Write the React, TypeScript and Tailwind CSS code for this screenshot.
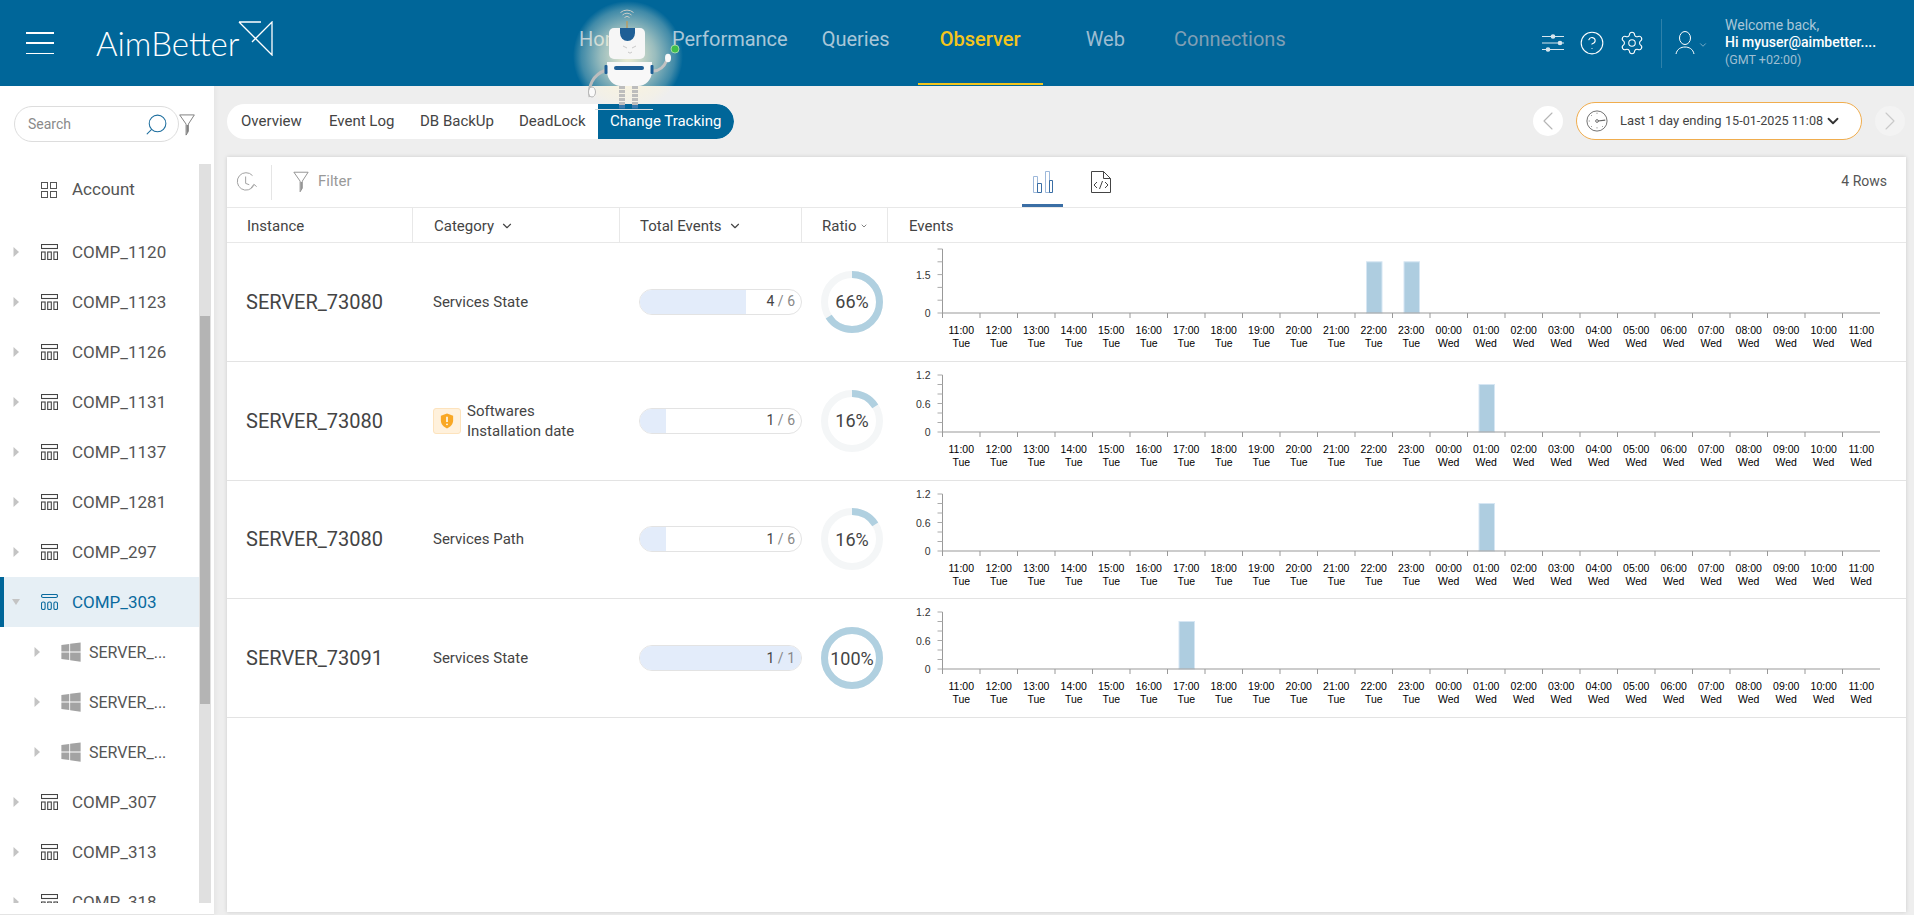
import React from "react";
import { FaWindows } from "react-icons/fa";
import { Search, CircleHelp, Settings, ChevronDown, ChevronLeft, ChevronRight } from "lucide-react";

const Funnel = ({ className }: { className?: string }) => (
  <svg viewBox="0 0 18 24" className={className} fill="none" stroke="currentColor" strokeWidth="1">
    <path d="M1 1h16l-6.5 10v8l-2.5 4v-12z" strokeLinejoin="round" />
    <path d="M8.5 12h1.5v7l-1.5 3z" fill="currentColor" stroke="none" />
  </svg>
);

const CompIcon = ({ active }: { active?: boolean }) => (
  <svg viewBox="0 0 17 16" className={`w-[17px] h-[16px] ${active ? "text-[#0a6a9e]" : "text-[#444]"}`} fill="none" stroke="currentColor" strokeWidth="1.1">
    <rect x="0.5" y="0.5" width="16" height={active ? 3 : 4} rx={active ? 1.5 : 0} />
    <rect x="0.5" y="8" width="3.6" height="7.5" rx={active ? 1.6 : 0} />
    <rect x="6.7" y="8" width="3.6" height="7.5" rx={active ? 1.6 : 0} />
    <rect x="12.9" y="8" width="3.6" height="7.5" rx={active ? 1.6 : 0} />
  </svg>
);

const Arrow = ({ open }: { open?: boolean }) => (
  <svg viewBox="0 0 8 10" className="w-[8px] h-[10px] text-[#c4c4c4]" fill="currentColor">
    {open ? <path d="M0 2h8l-4 6z" /> : <path d="M1.5 0l5.5 5-5.5 5z" />}
  </svg>
);

function TreeRow({ label, active, level }: { label: string; active?: boolean; level?: number }) {
  if (level === 1) {
    return (
      <div className="h-[50px] shrink-0 flex items-center">
        <div className="ml-[33px] w-[27px] flex"><Arrow /></div>
        <FaWindows className="text-[22px] text-[#a3a3a3]" />
        <span className="ml-[7px] text-[16px] text-[#555] mt-[1px]">{label}</span>
      </div>
    );
  }
  return (
    <div className={`h-[50px] shrink-0 flex items-center ${active ? "bg-[#e6eff5] border-l-4 border-[#006699]" : "pl-1"}`}>
      <div className="ml-[8px] w-[29px] flex"><Arrow open={active} /></div>
      <CompIcon active={active} />
      <span className={`ml-[14px] text-[17px] leading-none ${active ? "text-[#0a6a9e]" : "text-[#555]"}`}>{label}</span>
    </div>
  );
}

function Sidebar() {
  const before = ["COMP_1120", "COMP_1123", "COMP_1126", "COMP_1131", "COMP_1137", "COMP_1281", "COMP_297"];
  return (
    <aside className="w-[214px] shrink-0 bg-white flex flex-col border-b border-[#e4e4e4] [box-shadow:2px_0_4px_rgba(0,0,0,0.04)]">
      <div className="h-[78px] shrink-0 flex items-start pt-[20px] pl-[14px]">
        <div className="w-[165px] h-[36px] rounded-full border border-[#ddd] flex items-center justify-between pl-[13px] pr-[9px]">
          <span className="text-[14px] text-[#8a8a8a]">Search</span>
          <Search className="w-[25px] h-[25px] -scale-x-100 text-[#1f6f9f]" strokeWidth={1} />
        </div>
        <Funnel className="-ml-[1px] w-[18px] h-[22px] mt-[8px] text-[#777]" />
      </div>
      <div className="h-[739px] flex overflow-hidden">
        <div className="w-[199px] shrink-0 flex flex-col overflow-hidden">
          <div className="h-[50px] shrink-0 flex items-center pl-[41px] mb-[12px] mt-[1px]">
            <svg viewBox="0 0 16 16" className="w-[16px] h-[16px] text-[#555]" fill="none" stroke="currentColor" strokeWidth="1">
              <rect x="0.5" y="0.5" width="6" height="6" />
              <rect x="9.5" y="0.5" width="6" height="6" />
              <rect x="0.5" y="9.5" width="6" height="6" />
              <rect x="9.5" y="9.5" width="6" height="6" />
            </svg>
            <span className="ml-[15px] text-[17px] text-[#555]">Account</span>
          </div>
          {before.map((l) => <TreeRow key={l} label={l} />)}
          <TreeRow label="COMP_303" active />
          <TreeRow label="SERVER_..." level={1} />
          <TreeRow label="SERVER_..." level={1} />
          <TreeRow label="SERVER_..." level={1} />
          <TreeRow label="COMP_307" />
          <TreeRow label="COMP_313" />
          <TreeRow label="COMP_318" />
        </div>
        <div className="w-[12px] bg-[#e0e0e0] flex justify-center">
          <div className="w-[10px] h-[388px] mt-[152px] bg-[#b4b4b4]" />
        </div>
      </div>
    </aside>
  );
}

function Robot() {
  return (
    <svg viewBox="0 0 120 120" className="absolute left-[570px] top-0 w-[120px] h-[120px] pointer-events-none">
      <defs>
        <radialGradient id="glow" cx="0.5" cy="0.5" r="0.5">
          <stop offset="0" stopColor="#fff6d6" stopOpacity="0.95" />
          <stop offset="0.5" stopColor="#fff6d6" stopOpacity="0.6" />
          <stop offset="0.85" stopColor="#fff6d6" stopOpacity="0.25" />
          <stop offset="1" stopColor="#fff6d6" stopOpacity="0" />
        </radialGradient>
        <clipPath id="glowClip"><rect x="0" y="0" width="120" height="104" /></clipPath>
      </defs>
      <circle cx="58" cy="56" r="55" fill="url(#glow)" clipPath="url(#glowClip)" />
      <g fill="none" stroke="#c9ccc8" strokeWidth="1">
        <path d="M52.500 15a6.500 6.500 0 0 1 9 0M50.500 12.500a10 10 0 0 1 13 0M54.500 17.500a3.500 3.500 0 0 1 5 0" />
      </g>
      <path d="M57 21v7" stroke="#b79c64" strokeWidth="1.5" />
      <path d="M20 97c-2-10 2-22 16-27" stroke="#bdbdbd" strokeWidth="3" fill="none" />
      <ellipse cx="22" cy="92" rx="3.5" ry="5" fill="#fafafa" stroke="#b5b5b5" />
      <path d="M83 71c7 0 11-4 14-11" stroke="#c2c2c2" strokeWidth="3" fill="none" />
      <ellipse cx="98" cy="58" rx="3" ry="4.200" fill="#fafafa" />
      <rect x="39" y="28" width="36" height="31" rx="5" fill="#f6f6f6" />
      <path d="M50 28h15v5a7.500 8 0 0 1-15 0z" fill="#1f5f96" />
      <path d="M53 46l4 2M66 46l-4 2M58 52l2 1.200 2-1.200" stroke="#c9c9c9" strokeWidth="1" fill="none" />
      <path d="M37 62h45v9c0 9-7 15-14 15h-17c-7 0-14-6-14-15z" fill="#f8f8f8" />
      <rect x="44" y="66" width="30" height="4" rx="2" fill="#1f5f96" />
      <rect x="34.500" y="65" width="3" height="9" rx="1" fill="#1f5f96" />
      <rect x="80.500" y="65" width="3" height="9" rx="1" fill="#1f5f96" />
      <g stroke="#bdbdbd" strokeWidth="6" strokeDasharray="3 1">
        <path d="M52 86v19M65 86v19" />
      </g>
      <path d="M49 108.500h6v-3.500h-6zM62 108.500h6v-3.500h-6z" fill="#3a79ad" />
      <path d="M25 109.500h58" stroke="#d4dde0" strokeWidth="1" />
      <circle cx="105" cy="49" r="4" fill="#3fbf4a" stroke="#9fd8a5" />
    </svg>
  );
}

function TopBar() {
  return (
    <header className="h-[86px] shrink-0 bg-[#006699] flex items-center relative">
      <div className="ml-[26px] w-[28px] h-[22px] flex flex-col justify-between">
        <div className="h-[1.5px] bg-white" /><div className="h-[1.5px] bg-white" /><div className="h-[1.5px] bg-white" />
      </div>
      <div className="ml-[42px] flex items-start">
        <span className="[font-family:Lato,sans-serif] font-light text-[33px] leading-none text-white mt-[1px]">AimBetter</span>
        <svg viewBox="0 0 35 35" className="w-[35px] h-[35px] -ml-[1px] -mt-[5px] text-white" fill="none" stroke="currentColor" strokeWidth="1.3">
          <path d="M1 1h22M1 1l33 33V1L14 21" />
        </svg>
      </div>
      <nav className="absolute left-[579px] top-0 h-[85px] flex items-center text-[20px]">
        <span className="text-[#a9c6d8] w-[93px] pb-[8px]">Home</span>
        <span className="text-[#a9c6d8] pb-[8px]">Performance</span>
        <span className="text-[#a9c6d8] ml-[34px] pb-[8px]">Queries</span>
        <span className="text-[#f4c51c] ml-[28px] w-[125px] h-[85px] pb-[6px] flex items-center justify-center border-b-2 border-[#f4c51c] font-medium">Observer</span>
        <span className="text-[#9dbdd2] ml-[43px] pb-[8px]">Web</span>
        <span className="text-[#7f9fb5] ml-[49px] pb-[8px]">Connections</span>
      </nav>
      <div className="ml-auto flex items-center h-full">
        <svg viewBox="0 0 22 18" className="w-[22px] h-[18px] text-[#d8e6ee]" fill="none" stroke="currentColor" strokeWidth="1.2">
          <path d="M0 2.500h22M0 9h22M0 15.500h22" />
          <circle cx="11" cy="2.500" r="1.700" fill="currentColor" /><circle cx="18" cy="9" r="1.700" fill="currentColor" /><circle cx="6" cy="15.500" r="1.700" fill="currentColor" />
        </svg>
        <CircleHelp className="ml-[15px] w-[26px] h-[26px] text-white" strokeWidth={1} />
        <Settings className="ml-[14px] w-[26px] h-[26px] text-white" strokeWidth={1} />
        <div className="ml-[16px] w-px h-[49px] bg-[#2e81aa]" />
        <svg viewBox="0 0 20 24" className="ml-[13px] w-[20px] h-[24px] text-white" fill="none" stroke="currentColor" strokeWidth="1">
          <ellipse cx="10" cy="7" rx="5.500" ry="6.500" /><path d="M1 23c1-5 5-7 9-7s8 2 9 7" />
        </svg>
        <ChevronDown className="ml-[3px] mt-[4px] w-[10px] h-[10px] text-[#bcd3e0]" strokeWidth={1.5} />
        <div className="ml-[17px] w-[189px] flex flex-col -mt-[1px]">
          <span className="text-[14px] leading-[17px] text-[#a9c6d8]">Welcome back,</span>
          <span className="text-[14px] leading-[17px] text-white font-medium">Hi myuser@aimbetter....</span>
          <span className="text-[12.500px] leading-[17px] text-[#9fbfd2]">(GMT +02:00)</span>
        </div>
      </div>
    </header>
  );
}

function SubBar() {
  const tabs = [["Overview", 88], ["Event Log", 91], ["DB BackUp", 99], ["DeadLock", 79]] as const;
  return (
    <div className="h-[71px] shrink-0 flex items-start pt-[18px] pl-[13px] pr-[9px]">
      <div className="h-[35px] flex items-center bg-white rounded-full text-[15px] text-[#444] overflow-hidden">
        <div className="pl-[14px] flex">
          {tabs.map(([t, w]) => <span key={t} style={{ width: w }}>{t}</span>)}
        </div>
        <span className="h-full w-[136px] bg-[#006699] text-white flex items-center pl-[12px] rounded-r-full">Change Tracking</span>
      </div>
      <div className="ml-auto flex items-center -mt-[2px]">
        <div className="w-[30px] h-[30px] rounded-full bg-white flex items-center justify-center">
          <ChevronLeft className="w-[32px] h-[32px] shrink-0 text-[#b5b5b5]" strokeWidth={0.8} />
        </div>
        <div className="ml-[13px] w-[286px] h-[38px] rounded-full bg-white border border-[#f0ad4e] flex items-center pl-[9px] text-[13px] text-[#444]">
          <svg viewBox="0 0 24 24" className="w-[22px] h-[22px] text-[#666]" fill="none" stroke="currentColor" strokeWidth="1">
            <circle cx="12" cy="12" r="11" /><circle cx="12" cy="12" r="1.500" /><path d="M13 12l8-1" strokeWidth="1.300" />
            <path d="M12 3v2M12 19v2M3 12h2M5.500 5.500l1.200 1.200M5.500 18.500l1.200-1.200M18.500 18.500l-1.200-1.200" strokeDasharray="1 1" />
          </svg>
          <span className="ml-[12px] w-[105px]">Last 1 day ending</span>
          <span className="text-[12.600px]">15-01-2025 11:08</span>
          <ChevronDown className="ml-[1px] w-[18px] h-[18px] text-[#333]" strokeWidth={2.400} />
        </div>
        <div className="ml-[13px] w-[30px] h-[30px] rounded-full bg-[#f3f3f3] flex items-center justify-center">
          <ChevronRight className="w-[32px] h-[32px] shrink-0 text-[#c9c9c9]" strokeWidth={0.8} />
        </div>
      </div>
    </div>
  );
}

function Donut({ pct }: { pct: number }) {
  const r = 27.5;
  const c = 2 * Math.PI * r;
  return (
    <div className="relative w-[62px] h-[62px]">
      <svg viewBox="0 0 62 62" className="w-[62px] h-[62px] -rotate-90" fill="none" strokeWidth="7">
        <circle cx="31" cy="31" r={r} stroke="#f4f6f7" />
        <circle cx="31" cy="31" r={r} stroke="#b0d0e0" strokeDasharray={`${(c * pct) / 100} ${c}`} />
      </svg>
      <span className="absolute inset-0 flex items-center justify-center text-[18px] text-[#444]">{pct}%</span>
    </div>
  );
}

const hours = ["11:00", "12:00", "13:00", "14:00", "15:00", "16:00", "17:00", "18:00", "19:00", "20:00", "21:00", "22:00", "23:00", "00:00", "01:00", "02:00", "03:00", "04:00", "05:00", "06:00", "07:00", "08:00", "09:00", "10:00", "11:00"];

function Chart({ top, bars, maxV, labels, steps }: { top: number; bars: number[]; maxV: number; labels: [number, string][]; steps: number }) {
  const x0 = 54.5, axis = 70, slot = 37.5;
  const h = axis - top;
  const barH = maxV === 2.5 ? 51.2 : 47.5;
  return (
    <svg viewBox="0 0 1018 118" className="w-[1018px] h-[118px]" style={{ fontFamily: "'Liberation Sans',sans-serif" }}>
      {bars.map((b) => (
        <rect key={b} x={x0 + b * slot + 11.5} y={axis - barH} width="15.5" height={barH} fill="#aecde0" stroke="#d6e6f3" strokeWidth="1" />
      ))}
      <path d={`M${x0} ${top}V${axis}H${x0 + 25 * slot}`} stroke="#999" strokeWidth="1" fill="none" />
      {Array.from({ length: steps + 1 }).map((_, i) => (
        <path key={i} d={`M${x0 - 5} ${top + (h * i) / steps}H${x0}`} stroke="#aaa" strokeWidth="1" />
      ))}
      {labels.map(([v, t]) => (
        <text key={t} x={x0 - 12} y={axis - (v / maxV) * h + 4} textAnchor="end" fontSize="10.5" fill="#333">{t}</text>
      ))}
      {hours.map((t, i) => (
        <g key={i}>
          <path d={`M${x0 + i * slot} ${axis}v5`} stroke="#999" strokeWidth="1" />
          <text x={x0 + i * slot + slot / 2} y={91} textAnchor="middle" fontSize="10.5" fill="#000">{t}</text>
          <text x={x0 + i * slot + slot / 2} y={104} textAnchor="middle" fontSize="10.5" fill="#000">{i >= 13 ? "Wed" : "Tue"}</text>
        </g>
      ))}
    </svg>
  );
}

function Shield() {
  return (
    <div className="w-[28px] h-[26px] shrink-0 rounded-[3px] bg-[#fff1dc] border border-[#fde3bd] flex items-center justify-center">
      <svg viewBox="0 0 16 18" className="w-[14px] h-[16px]">
        <path d="M8 0.500l7 2.500v5c0 4.500-3 7.500-7 9.500-4-2-7-5-7-9.500V3z" fill="#f9a825" />
        <path d="M8 4v6" stroke="#fff" strokeWidth="1.800" /><circle cx="8" cy="12.800" r="1" fill="#fff" />
      </svg>
    </div>
  );
}

function Row({ server, category, icon, num, den, pct, chart }: { server: string; category: React.ReactNode; icon?: boolean; num: number; den: number; pct: number; chart: React.ReactNode }) {
  const width = num === den ? 100 : pct;
  return (
    <div className="h-[118.750px] shrink-0 flex border-b border-[#e3e3e3]">
      <div className="w-[186px] shrink-0 flex items-center pl-[19px] text-[20px] text-[#444]">{server}</div>
      <div className="w-[207px] shrink-0 flex items-center pl-[20px] text-[15px] leading-[20px] text-[#444] gap-[6px]">
        {icon && <Shield />}
        <span>{category}</span>
      </div>
      <div className="w-[182px] shrink-0 flex items-center pl-[19px]">
        <div className="w-[163px] h-[26px] rounded-full border border-[#e3e3e3] overflow-hidden relative bg-white">
          <div className="h-full bg-[#e3ecfa]" style={{ width: `${width}%` }} />
          <span className="absolute right-[6px] top-0 h-full flex items-center text-[14px] text-[#888]"><b className="font-normal text-[#444]">{num}</b>&nbsp;/ {den}</span>
        </div>
      </div>
      <div className="w-[86px] shrink-0 flex items-center pl-[19px]"><Donut pct={pct} /></div>
      <div className="flex-1 overflow-hidden">{chart}</div>
    </div>
  );
}

const HeadCell = ({ w, pl, label, chev, small }: { w: number | string; pl: number; label: string; chev?: boolean; small?: boolean }) => (
  <div className="h-full flex items-center border-r border-[#e8e8e8] text-[15px] text-[#444] pt-[2px]" style={{ width: w, paddingLeft: pl }}>
    {label}
    {chev && <ChevronDown className={small ? "ml-[3px] w-[8px] h-[8px]" : "ml-[6px] w-[14px] h-[14px]"} strokeWidth={2} />}
  </div>
);

export default function App() {
  const y12: [number, string][] = [[0, "0"], [0.6, "0.6"], [1.2, "1.2"]];
  return (
    <div className="w-screen h-screen overflow-hidden bg-[#eeeeee] flex flex-col relative [font-family:Roboto,sans-serif]">
      <TopBar />
      <div className="flex-1 flex min-h-0">
        <Sidebar />
        <div className="flex-1 min-w-0 flex flex-col">
          <SubBar />
          <main className="ml-[13px] mr-[8px] mb-[3px] flex-1 min-h-0 bg-white [box-shadow:0_0_4px_rgba(0,0,0,0.14)] flex flex-col">
            <div className="h-[50px] shrink-0 flex items-center relative">
              <svg viewBox="0 0 24 24" className="ml-[9px] w-[22px] h-[22px] text-[#999]" fill="none" stroke="currentColor" strokeWidth="1">
                <path d="M19.500 15.500A9.500 9.500 0 1 1 18 5" /><path d="M10.500 6v7.500l4 1.500" /><path d="M16.500 18.500l3-4 3 2.500" />
              </svg>
              <div className="ml-[13px] w-px h-[35px] bg-[#e5e5e5]" />
              <Funnel className="ml-[21px] w-[16px] h-[22px] text-[#8a8a8a]" />
              <span className="ml-[9px] text-[15px] text-[#999] -mt-[2px]">Filter</span>
              <div className="absolute left-[795px] top-0 h-[50px] w-[41px] border-b-[3px] border-[#3a6ea5]" />
              <svg viewBox="0 0 20 22" className="absolute left-[806px] top-[14px] w-[20px] h-[22px]" fill="none" strokeWidth="1">
                <path d="M0.500 21.500V5.500h4v16zM12.500 21.500V0.500h4v21z" stroke="#9db8da" />
                <path d="M4.500 21.500V12.500h4v9zM16.500 21.500V9.500h3v12z" stroke="#3a6ea5" />
              </svg>
              <svg viewBox="0 0 20 22" className="absolute left-[864px] top-[14px] w-[20px] h-[22px] text-[#444]" fill="none" stroke="currentColor" strokeWidth="1">
                <path d="M0.500 0.500h12l7 7v14h-19zM12.500 0.500v7h7" /><path d="M6 11l-3 3 3 3M14 11l3 3-3 3M11.500 10l-3 8" />
              </svg>
              <span className="ml-auto mr-[19px] text-[14px] text-[#555] -mt-[2px]">4 Rows</span>
            </div>
            <div className="h-[36px] shrink-0 flex border-y border-[#e8e8e8]">
              <HeadCell w={186} pl={20} label="Instance" />
              <HeadCell w={207} pl={21} label="Category" chev />
              <HeadCell w={182} pl={20} label="Total Events" chev />
              <HeadCell w={86} pl={20} label="Ratio" chev small />
              <div className="flex items-center pl-[21px] pt-[2px] text-[15px] text-[#444]">Events</div>
            </div>
            <Row server="SERVER_73080" category="Services State" num={4} den={6} pct={66}
              chart={<Chart top={6} bars={[11, 12]} maxV={2.5} labels={[[0, "0"], [1.5, "1.5"]]} steps={5} />} />
            <Row server="SERVER_73080" icon category={<>Softwares<br />Installation date</>} num={1} den={6} pct={16}
              chart={<Chart top={13} bars={[14]} maxV={1.2} labels={y12} steps={6} />} />
            <Row server="SERVER_73080" category="Services Path" num={1} den={6} pct={16}
              chart={<Chart top={13} bars={[14]} maxV={1.2} labels={y12} steps={6} />} />
            <Row server="SERVER_73091" category="Services State" num={1} den={1} pct={100}
              chart={<Chart top={13} bars={[6]} maxV={1.2} labels={y12} steps={6} />} />
          </main>
        </div>
      </div>
      <Robot />
    </div>
  );
}
